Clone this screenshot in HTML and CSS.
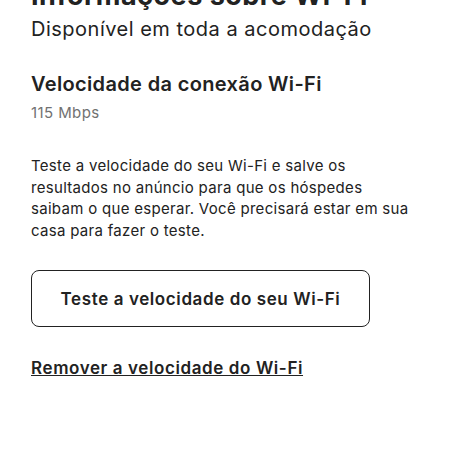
FILE: index.html
```html
<!DOCTYPE html>
<html lang="pt-BR">
<head>
    <meta charset="UTF-8">
    <meta name="viewport" content="width=device-width, initial-scale=1.0">
    <title>Informações sobre Wi-Fi</title>
    <link rel="stylesheet" href="styles.css">
</head>
<body>
    <div class="page">
        <h1>Informações sobre Wi-Fi</h1>
        <p class="subtitle">Disponível em toda a acomodação</p>

        <section class="speed">
            <h2>Velocidade da conexão Wi-Fi</h2>
            <p class="speed-value">115 Mbps</p>
        </section>

        <p class="description">Teste a velocidade do seu Wi-Fi e salve os resultados no anúncio para que os hóspedes saibam o que esperar. Você precisará estar em sua casa para fazer o teste.</p>

        <button class="test-btn">Teste a velocidade do seu Wi-Fi</button>

        <a class="remove-link" href="#">Remover a velocidade do Wi-Fi</a>
    </div>
</body>
</html>
```

FILE: styles.css
```css
body {
    font-family: Inter, Roboto, "Liberation Sans", sans-serif;
    margin: 0;
    background-color: #fff;
    color: #222;
}
.page {
    padding: 0 31px;
    margin-top: -19px;
}
h1 {
    font-size: 27px;
    font-weight: 700;
    line-height: 30px;
    letter-spacing: 0.5px;
    margin: 0;
}
.subtitle {
    font-size: 20px;
    line-height: 24px;
    letter-spacing: 0.5px;
    margin: 6px 0 0;
    color: #222;
}
.speed {
    margin-top: 31px;
}
h2 {
    font-size: 20px;
    font-weight: 600;
    line-height: 24px;
    letter-spacing: 0.35px;
    margin: 0;
}
.speed-value {
    font-size: 15px;
    line-height: 18px;
    letter-spacing: 0.4px;
    color: #717171;
    margin: 8px 0 0;
}
.description {
    font-size: 15px;
    line-height: 21.5px;
    letter-spacing: 0.3px;
    margin: 33px 0 0;
    color: #222;
}
.test-btn {
    display: block;
    width: 339px;
    height: 57px;
    margin-top: 29px;
    font-family: inherit;
    font-size: 17px;
    font-weight: 600;
    letter-spacing: 0.6px;
    color: #222;
    background: #fff;
    border: 1px solid #222;
    border-radius: 8px;
    cursor: pointer;
}
.remove-link {
    display: inline-block;
    margin-top: 30px;
    font-size: 17px;
    font-weight: 600;
    letter-spacing: 0.6px;
    color: #222;
    line-height: 22px;
}
```
